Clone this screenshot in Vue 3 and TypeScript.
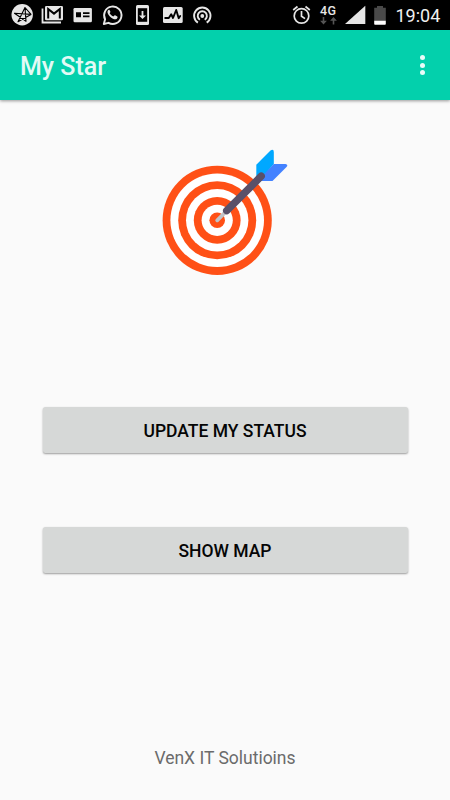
<script setup lang="ts">
const title: string = 'My Star'
const clock: string = '19:04'
const actions: string[] = ['Update my status', 'Show map']
const footer: string = 'VenX IT Solutioins'
</script>

<template>
  <div class="screen">
    <header class="status-bar">
      <div class="notifications">
        <svg class="cell" viewBox="0 0 30 30">
          <circle cx="15.2" cy="14.8" r="10.7" fill="#e6e6e6" />
          <path d="M18 7.5 24 14.4 7.5 13.2 19 21.3Z M18 7.5 11 21.8 24 14.4" fill="none" stroke="#000" stroke-width="1.1" stroke-linejoin="round" />
        </svg>
        <svg class="cell" viewBox="0 0 30 30">
          <path d="M5.5 8.5V22.5H24" fill="none" stroke="#e6e6e6" stroke-width="1.8" />
          <rect x="8" y="6" width="18" height="14.2" rx="1.3" fill="#e6e6e6" />
          <path d="M11.2 18.6V9L17 13.6 22.8 9V18.6" fill="none" stroke="#000" stroke-width="2" />
        </svg>
        <svg class="cell" viewBox="0 0 30 30">
          <rect x="6.5" y="8" width="18.4" height="14.2" rx="1.2" fill="#e6e6e6" />
          <path d="M9 12.3h5v5H9zM16 12.3h6.5v1.7H16zM16 15.6h6.5v1.7H16z" fill="#000" />
        </svg>
        <svg class="cell" viewBox="0 0 30 30">
          <path d="M6.8 24 8.1 19.3A8.7 8.7 0 1 1 11.5 22.8Z" fill="none" stroke="#e6e6e6" stroke-width="1.9" stroke-linejoin="round" />
          <path d="M12.5 10.1c-.5-.5-1.1-.2-1.6.5-.8 1.1-.4 2.6.6 4.1 1.4 2.2 3.3 3.8 5.6 4.5 1.5.5 3.1-.3 3.4-1.8.1-.5.1-.8-.2-1l-2.2-1.1c-.4-.2-.7 0-1.2.8-.3.4-.6.4-1 .2-1.3-.6-2.4-1.6-3.1-2.8-.2-.4-.1-.6.4-1.1.3-.4.2-.6 0-1.1Z" fill="#e6e6e6" />
        </svg>
        <svg class="cell" viewBox="0 0 30 30">
          <rect x="9" y="5" width="13" height="20" rx="1.5" fill="#e6e6e6" />
          <path d="M10.8 8.2h9.4v13.6h-9.4z" fill="#000" />
          <path d="M14.6 11h1.8v4.5H19L15.5 19 12 15.5h2.6Z" fill="#e6e6e6" />
        </svg>
        <svg class="cell" viewBox="0 0 30 30">
          <rect x="6" y="7" width="19.7" height="16" rx="1.5" fill="#e6e6e6" />
          <path d="M8.2 18H11.8L14.2 14.2 16 18 19.2 10 21.7 18.2 23.2 16" fill="none" stroke="#000" stroke-width="1.9" stroke-linejoin="round" stroke-linecap="round" />
        </svg>
        <svg class="cell" viewBox="0 0 30 30">
          <g fill="none" stroke="#e6e6e6" stroke-width="1.9">
            <path d="M10.9 22.6A8.2 8.2 0 1 1 19.7 22.6" />
            <path d="M12.9 19.7A4.6 4.6 0 1 1 17.7 19.7" />
          </g>
          <circle cx="15.3" cy="16" r="1.9" fill="#e6e6e6" />
        </svg>
      </div>

      <div class="system">
        <svg class="alarm" viewBox="0 0 20 30">
          <g fill="none" stroke="#e6e6e6" stroke-width="1.7">
            <circle cx="9.5" cy="15.9" r="7.3" />
            <path d="M9.5 11v5.2l3.5 2.4M1.2 10l4.3-3.5M17.8 10l-4.3-3.5" />
          </g>
        </svg>
        <div class="network">
          <span>4G</span>
          <svg class="arrows" viewBox="0 0 18 8">
            <path d="M2.7 0h1.6v3.7h2.6L3.5 7.5.1 3.7h2.6ZM12.7 7.5h1.6V3.8h2.6L13.5 0l-3.4 3.8h2.6Z" fill="#555" />
          </svg>
        </div>
        <svg class="signal" viewBox="0 0 22 30"><path d="M21.3 5.7V24H1Z" fill="#e6e6e6" /></svg>
        <svg class="battery" viewBox="0 0 14 30">
          <path d="M1.2 7.8H4V6h6v1.8h2.8V21H1.2Z" fill="#494949" />
          <path d="M1.2 20.8h11.6V24a.8.8 0 0 1-.8.8H2a.8.8 0 0 1-.8-.8Z" fill="#fff" />
        </svg>
        <time class="clock">{{ clock }}</time>
      </div>
    </header>

    <nav class="app-bar">
      <h1>{{ title }}</h1>
      <button class="overflow" aria-label="More options">
        <i></i><i></i><i></i>
      </button>
    </nav>

    <main>
      <svg class="target" viewBox="0 0 150 145">
        <circle cx="67.2" cy="80.3" r="54.6" fill="#ff5016" />
        <circle cx="67.2" cy="80.3" r="46.8" fill="#fff" />
        <circle cx="67.2" cy="80.3" r="39" fill="#ff5016" />
        <circle cx="67.2" cy="80.3" r="31.2" fill="#fff" />
        <circle cx="67.2" cy="80.3" r="23.4" fill="#ff5016" />
        <circle cx="67.2" cy="80.3" r="15.6" fill="#fff" />
        <circle cx="67.2" cy="80.3" r="7.8" fill="#ff5016" />
        <path d="M67.2 80.3 76 71.5" stroke="#c3c3c7" stroke-width="3.8" stroke-linecap="round" />
        <path d="M106.3 24.8 120.5 10.4Q123.800 8.8 123.8 12V24L114 35.5 106.3 40Z" fill="#00a8ff" />
        <path d="M123.8 24H135.5Q138.5 24.5 136.5 27L122.500 41H107.5Z" fill="#4382ff" />
        <path d="M76.7 70.7 111.2 36.2" stroke="#5a5069" stroke-width="7.4" stroke-linecap="round" />
      </svg>

      <div class="actions">
        <button v-for="label in actions" :key="label" class="action">{{ label }}</button>
      </div>
    </main>
    <footer>{{ footer }}</footer>
  </div>
</template>

<style>
body {
  margin: 0;
}
</style>

<style scoped>
.screen {
  width: 450px;
  height: 800px;
  display: flex;
  flex-direction: column;
  overflow: hidden;
  background: #fafafa;
  font-family: Roboto, "Liberation Sans", sans-serif;
}

svg {
  display: block;
  flex: none;
}

.status-bar {
  height: 30px;
  flex: none;
  display: flex;
  justify-content: space-between;
  background: #000;
  color: #e6e6e6;
}

.notifications {
  display: flex;
  padding-left: 7px;
}

.cell {
  width: 30px;
  height: 30px;
}

.system {
  display: flex;
  padding-right: 10px;
}

.alarm {
  width: 20px;
  height: 30px;
}

.network {
  width: 18px;
  margin-left: 8.5px;
  padding-top: 4px;
  font-size: 12.5px;
  line-height: 13px;
  font-weight: 500;
  letter-spacing: 0.3px;
}

.network span {
  display: block;
}

.arrows {
  width: 18px;
  height: 8px;
}

.signal {
  width: 22px;
  height: 30px;
  margin-left: 5.5px;
}

.battery {
  width: 14px;
  height: 30px;
  margin-left: 7.5px;
}

.clock {
  width: 44.5px;
  margin-left: 8.5px;
  font-size: 18px;
  font-weight: 400;
  line-height: 31px;
  color: #f0f0f0;
}

.app-bar {
  height: 70px;
  flex: none;
  display: flex;
  align-items: center;
  justify-content: space-between;
  box-sizing: border-box;
  padding: 0 25px 0 20px;
  background: #03d0ac;
  box-shadow: 0 1px 3px rgba(0, 0, 0, 0.4);
}

h1 {
  margin: 3px 0 0;
  font-size: 25px;
  line-height: 30px;
  font-weight: 500;
  color: #e2faf5;
}

button {
  border: 0;
  font-family: inherit;
}

.overflow {
  display: flex;
  flex-direction: column;
  gap: 2.5px;
  padding: 0;
  background: none;
}

.overflow i {
  width: 5px;
  height: 5px;
  border-radius: 50%;
  background: #e8fcf8;
}

main {
  flex: 1;
  padding: 40px 42.5px 0;
}

.target {
  width: 150px;
  height: 145px;
  margin-left: 107.5px;
}

.actions {
  display: flex;
  flex-direction: column;
  gap: 74px;
  margin-top: 122px;
}

.action {
  height: 46px;
  padding: 2px 0 0;
  border-radius: 2.5px;
  background: #d6d8d7;
  box-shadow: 0 1px 2px rgba(0, 0, 0, 0.38);
  font-size: 17.5px;
  font-weight: 500;
  color: #050505;
  text-transform: uppercase;
}

footer {
  flex: none;
  padding-bottom: 31px;
  text-align: center;
  font-size: 17.5px;
  line-height: 21px;
  color: #6b6b6b;
}
</style>
